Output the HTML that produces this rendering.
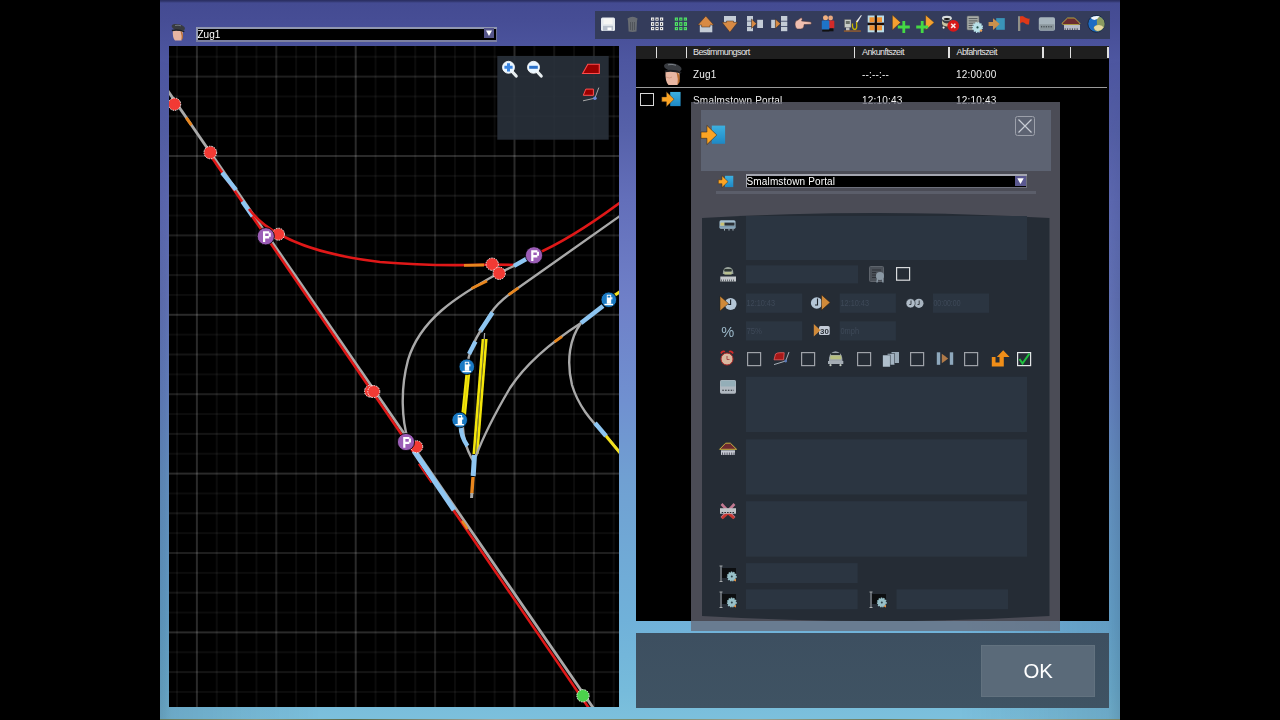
<!DOCTYPE html><html><head><meta charset="utf-8"><style>
*{margin:0;padding:0;box-sizing:border-box}
html,body{width:1280px;height:720px;overflow:hidden;background:#000;font-family:"Liberation Sans",sans-serif}
.abs{position:absolute}
#panel{position:absolute;left:160px;top:0;width:960px;height:720px;
 background:linear-gradient(to bottom,#2a2e62 0px,#2e3368 1px,#444b92 3px,#464d95 20px,#4d56a0 60px,#5661a9 130px,#636fba 200px,#6f80c8 300px,#7090d0 400px,#70a0d2 480px,#70aad6 560px,#70b1d9 620px,#76bbdb 690px,#7cc0dc 718px)}
#vig{position:absolute;left:160px;top:0;width:960px;height:720px;
 background:linear-gradient(to right,rgba(0,10,40,0.2) 0px,rgba(0,10,40,0.12) 12px,rgba(0,0,0,0) 160px,rgba(0,0,0,0) 800px,rgba(0,10,40,0.12) 948px,rgba(0,10,40,0.2) 960px);
 -webkit-mask-image:linear-gradient(to bottom,transparent 60px,#000 300px);mask-image:linear-gradient(to bottom,transparent 60px,#000 300px)}
#strip{position:absolute;left:160px;top:718.5px;width:960px;height:1.5px;background:linear-gradient(to right,#6a7a5a,#8a9478 10%,#5a6a4a 20%,#a0a49a 35%,#7a8a6a 50%,#9aa090 62%,#6a7a5a 75%,#a4a898 88%,#7a8668)}
#map{position:absolute;left:169px;top:46px;width:450px;height:661px;background:#000}
#list{position:absolute;left:636px;top:46px;width:473px;height:575px;background:#000}
#hdr{position:absolute;left:0;top:0;width:473px;height:13px;background:#1e1e1e}
.sep{position:absolute;top:1px;width:2px;height:11px;background:#e8e8e8}
.ht{position:absolute;top:1px;font-size:9px;color:#e6e6e6;letter-spacing:-0.6px;line-height:11px}
.rt{position:absolute;font-size:10px;color:#f0f0f0;line-height:12px;letter-spacing:0.2px}
#toolbar{position:absolute;left:595px;top:11px;width:515px;height:28px;background:#343b5b}
#dlg{position:absolute;left:691px;top:102px;width:369px;height:529px;background:rgba(100,103,118,0.72)}
#ok{position:absolute;left:636px;top:633px;width:473px;height:75px;background:linear-gradient(to bottom,#3d4f60,#3f5363)}
#okbtn{position:absolute;left:981px;top:645px;width:114px;height:52px;background:#5a6a79;color:#fff;font-size:21px;text-align:center;line-height:52px;border:1px solid #62727f}
#okbtn span{display:inline-block;transform:scaleX(0.97);position:relative;top:-1.5px}
</style></head><body><div id="panel"></div><div id="vig"></div><div id="strip"></div><svg id="map" width="450" height="661" viewBox="169 46 450 661"><rect x="169" y="46" width="450" height="661" fill="#000"/><rect x="176.05" y="46" width="2" height="661" fill="#0c0c0c"/><rect x="195.90" y="46" width="2" height="661" fill="#2a2a2a"/><rect x="215.75" y="46" width="2" height="661" fill="#0c0c0c"/><rect x="235.60" y="46" width="2" height="661" fill="#141414"/><rect x="255.45" y="46" width="2" height="661" fill="#0c0c0c"/><rect x="275.30" y="46" width="2" height="661" fill="#1e1e1e"/><rect x="295.15" y="46" width="2" height="661" fill="#0c0c0c"/><rect x="315.00" y="46" width="2" height="661" fill="#141414"/><rect x="334.85" y="46" width="2" height="661" fill="#0c0c0c"/><rect x="354.70" y="46" width="2" height="661" fill="#2a2a2a"/><rect x="374.55" y="46" width="2" height="661" fill="#0c0c0c"/><rect x="394.40" y="46" width="2" height="661" fill="#141414"/><rect x="414.25" y="46" width="2" height="661" fill="#0c0c0c"/><rect x="434.10" y="46" width="2" height="661" fill="#1e1e1e"/><rect x="453.95" y="46" width="2" height="661" fill="#0c0c0c"/><rect x="473.80" y="46" width="2" height="661" fill="#141414"/><rect x="493.65" y="46" width="2" height="661" fill="#0c0c0c"/><rect x="513.50" y="46" width="2" height="661" fill="#2a2a2a"/><rect x="533.35" y="46" width="2" height="661" fill="#0c0c0c"/><rect x="553.20" y="46" width="2" height="661" fill="#141414"/><rect x="573.05" y="46" width="2" height="661" fill="#0c0c0c"/><rect x="592.90" y="46" width="2" height="661" fill="#1e1e1e"/><rect x="612.75" y="46" width="2" height="661" fill="#0c0c0c"/><rect x="169" y="55.75" width="450" height="2" fill="#0c0c0c" style="mix-blend-mode:screen"/><rect x="169" y="75.60" width="450" height="2" fill="#1e1e1e" style="mix-blend-mode:screen"/><rect x="169" y="95.45" width="450" height="2" fill="#0c0c0c" style="mix-blend-mode:screen"/><rect x="169" y="115.30" width="450" height="2" fill="#141414" style="mix-blend-mode:screen"/><rect x="169" y="135.15" width="450" height="2" fill="#0c0c0c" style="mix-blend-mode:screen"/><rect x="169" y="155.00" width="450" height="2" fill="#2a2a2a" style="mix-blend-mode:screen"/><rect x="169" y="174.85" width="450" height="2" fill="#0c0c0c" style="mix-blend-mode:screen"/><rect x="169" y="194.70" width="450" height="2" fill="#141414" style="mix-blend-mode:screen"/><rect x="169" y="214.55" width="450" height="2" fill="#0c0c0c" style="mix-blend-mode:screen"/><rect x="169" y="234.40" width="450" height="2" fill="#1e1e1e" style="mix-blend-mode:screen"/><rect x="169" y="254.25" width="450" height="2" fill="#0c0c0c" style="mix-blend-mode:screen"/><rect x="169" y="274.10" width="450" height="2" fill="#141414" style="mix-blend-mode:screen"/><rect x="169" y="293.95" width="450" height="2" fill="#0c0c0c" style="mix-blend-mode:screen"/><rect x="169" y="313.80" width="450" height="2" fill="#2a2a2a" style="mix-blend-mode:screen"/><rect x="169" y="333.65" width="450" height="2" fill="#0c0c0c" style="mix-blend-mode:screen"/><rect x="169" y="353.50" width="450" height="2" fill="#141414" style="mix-blend-mode:screen"/><rect x="169" y="373.35" width="450" height="2" fill="#0c0c0c" style="mix-blend-mode:screen"/><rect x="169" y="393.20" width="450" height="2" fill="#1e1e1e" style="mix-blend-mode:screen"/><rect x="169" y="413.05" width="450" height="2" fill="#0c0c0c" style="mix-blend-mode:screen"/><rect x="169" y="432.90" width="450" height="2" fill="#141414" style="mix-blend-mode:screen"/><rect x="169" y="452.75" width="450" height="2" fill="#0c0c0c" style="mix-blend-mode:screen"/><rect x="169" y="472.60" width="450" height="2" fill="#2a2a2a" style="mix-blend-mode:screen"/><rect x="169" y="492.45" width="450" height="2" fill="#0c0c0c" style="mix-blend-mode:screen"/><rect x="169" y="512.30" width="450" height="2" fill="#141414" style="mix-blend-mode:screen"/><rect x="169" y="532.15" width="450" height="2" fill="#0c0c0c" style="mix-blend-mode:screen"/><rect x="169" y="552.00" width="450" height="2" fill="#1e1e1e" style="mix-blend-mode:screen"/><rect x="169" y="571.85" width="450" height="2" fill="#0c0c0c" style="mix-blend-mode:screen"/><rect x="169" y="591.70" width="450" height="2" fill="#141414" style="mix-blend-mode:screen"/><rect x="169" y="611.55" width="450" height="2" fill="#0c0c0c" style="mix-blend-mode:screen"/><rect x="169" y="631.40" width="450" height="2" fill="#2a2a2a" style="mix-blend-mode:screen"/><rect x="169" y="651.25" width="450" height="2" fill="#0c0c0c" style="mix-blend-mode:screen"/><rect x="169" y="671.10" width="450" height="2" fill="#141414" style="mix-blend-mode:screen"/><rect x="169" y="690.95" width="450" height="2" fill="#0c0c0c" style="mix-blend-mode:screen"/><g fill="none" stroke-linecap="butt">
<!-- main gray line -->
<path d="M165.5,87.5 L594,709" stroke="#a9a9a9" stroke-width="2.8"/>
<!-- main red line -->
<path d="M211,156.2 L590,709.8" stroke="#e01818" stroke-width="2.6"/>
<!-- orange dash top -->
<path d="M186.2,117.6 L191.4,125.1" stroke="#e8861e" stroke-width="2.8"/>
<!-- light blue on main upper -->
<path d="M222,172.6 L236,189.8" stroke="#8ec6f2" stroke-width="4.4"/>
<path d="M242.4,201.6 L252.6,216.2" stroke="#8ec6f2" stroke-width="4.4"/>
<!-- light blue lower main -->
<path d="M414,451 L454,510" stroke="#8ec6f2" stroke-width="5"/>
<path d="M420.2,463 L433,481.6" stroke="#e01818" stroke-width="1.6" transform="translate(-1.6,1)"/>
<path d="M461,521.5 L466.5,529.5" stroke="#e8861e" stroke-width="2.4" transform="translate(1,-0.5)"/>
<!-- red branch curve -->
<path d="M249,209 C258,221 267,228 279,234 C300,246 330,256 380,262 C420,265.5 460,265.5 492,264.5 L516,265" stroke="#e01818" stroke-width="2.6"/>
<path d="M464,265.3 L484,265" stroke="#e8861e" stroke-width="2.8"/>
<!-- red to top right -->
<path d="M534,255 C560,244 590,225 621,202" stroke="#e01818" stroke-width="2.6"/>
<!-- gray A -->
<path d="M516,265 L499,273 C455,297 420,320 408,360 C400,390 402,420 408,440" stroke="#a9a9a9" stroke-width="2.4"/>
<path d="M471.5,288.4 L487,281" stroke="#e8861e" stroke-width="2.8"/>
<path d="M514,265.8 L528,258" stroke="#8ec6f2" stroke-width="4.4"/>
<!-- gray B -->
<path d="M621,215.2 L518,288 C505,297 496,305 491,313 L480,331" stroke="#a9a9a9" stroke-width="2.4"/>
<path d="M508.5,294.8 L518.5,287.8" stroke="#e8861e" stroke-width="2.8"/>
<path d="M492.5,312.5 L480,331.5" stroke="#8ec6f2" stroke-width="4.6"/>
<!-- left branch -->
<path d="M481,330 C476,338 471,348 468.5,358 L468,372 L463.6,415 C461,432 466,450 474,462" stroke="#a9a9a9" stroke-width="2.4"/>
<path d="M475.5,341.5 L469,354" stroke="#8ec6f2" stroke-width="4.4"/>
<path d="M468,372 L463.6,415" stroke="#f4e60a" stroke-width="4.8"/><path d="M468,374 L463.6,413" stroke="#c8b800" stroke-width="0.6"/>
<path d="M460.8,427 C461,435 464,441 467.5,446" stroke="#8ec6f2" stroke-width="4.4"/>
<!-- double yellow -->
<path d="M484.6,333 L475.5,456" stroke="#a9a9a9" stroke-width="1.2"/>
<path d="M482.9,339 L473.8,454" stroke="#f4e60a" stroke-width="2.6"/>
<path d="M486.3,339 L477.2,454" stroke="#f4e60a" stroke-width="2.6"/>
<path d="M484.6,339 L475.5,454" stroke="#6a6400" stroke-width="0.7"/>
<!-- right gray C to junction -->
<path d="M581,323 C550,343 525,365 510,388 C497,410 485,432 476,456" stroke="#a9a9a9" stroke-width="2.4"/>
<path d="M554.5,341.8 L562,336.6" stroke="#e8861e" stroke-width="2.8"/>
<!-- junction bottom -->
<path d="M474.5,455 L473.2,476" stroke="#8ec6f2" stroke-width="5"/>
<path d="M473,477 L471.8,494" stroke="#e8861e" stroke-width="3.4"/>
<path d="M471.9,493 L471.6,498" stroke="#a9a9a9" stroke-width="3"/>
<!-- right branch D -->
<path d="M581,323 C570,338 566,360 572,385 C578,405 590,420 606,435.5 L621,454" stroke="#a9a9a9" stroke-width="2.4"/>
<path d="M595,423 L606,436" stroke="#8ec6f2" stroke-width="4.4"/>
<path d="M606,436 L621,454" stroke="#f2e01e" stroke-width="3"/>
<path d="M581,323 L603,306" stroke="#8ec6f2" stroke-width="4.6"/>
<path d="M612,297 L621,291" stroke="#f2e01e" stroke-width="3"/>
</g>
<!-- markers -->
<g stroke="#fff" stroke-width="0.9" stroke-dasharray="1.5 1">
<circle cx="174.5" cy="104.2" r="6.2" fill="#f23a34"/>
<circle cx="210.3" cy="152.5" r="6.3" fill="#f23a34"/>
<circle cx="278.5" cy="234.2" r="6" fill="#f23a34"/>
<circle cx="370.5" cy="391.2" r="6" fill="#f23a34"/>
<circle cx="373.8" cy="391.6" r="6" fill="#f23a34"/>
<circle cx="416.7" cy="446.7" r="6" fill="#f23a34"/>
<circle cx="492.2" cy="264.2" r="6.2" fill="#f23a34"/>
<circle cx="499.2" cy="273.3" r="6.2" fill="#f23a34"/>
<circle cx="583" cy="695.8" r="6.2" fill="#4cd24c"/>
</g>
<g stroke="#000" stroke-width="0.8">
<circle cx="265.8" cy="236.3" r="8.6" fill="#9b5db6"/>
<circle cx="406" cy="442" r="8.6" fill="#9b5db6"/>
<circle cx="534" cy="255.3" r="8.6" fill="#9b5db6"/>
<circle cx="466.8" cy="366.8" r="7.8" fill="#1a7ac4"/>
<circle cx="459.7" cy="420" r="7.8" fill="#1a7ac4"/>
<circle cx="608.8" cy="299.8" r="7.8" fill="#1a7ac4"/>
</g>
<g fill="#fff">
<path d="M263,231.2 h6.2 v1.6 h1.6 v4 h-1.6 v1.6 h-4 v3.6 h-2.2 z M265.2,233.4 v2.6 h3.4 v-2.6 z" fill-rule="evenodd"/>
<path d="M403.2,436.9 h6.2 v1.6 h1.6 v4 h-1.6 v1.6 h-4 v3.6 h-2.2 z M405.4,439.1 v2.6 h3.4 v-2.6 z" fill-rule="evenodd"/>
<path d="M531.2,250.2 h6.2 v1.6 h1.6 v4 h-1.6 v1.6 h-4 v3.6 h-2.2 z M533.4,252.4 v2.6 h3.4 v-2.6 z" fill-rule="evenodd"/>
</g>
<g fill="#fff">
<g transform="translate(466.8,366.8)"><path d="M-2,-5 h4.4 v9 h-4.4 z M-1.2,-4 v1.6 h2.6 v-1.6 z" fill-rule="evenodd"/><rect x="-4.4" y="4" width="8.6" height="1.4"/><rect x="2.4" y="-2.6" width="1.2" height="2.2"/></g>
<g transform="translate(459.7,420)"><path d="M-2,-5 h4.4 v9 h-4.4 z M-1.2,-4 v1.6 h2.6 v-1.6 z" fill-rule="evenodd"/><rect x="-4.4" y="4" width="8.6" height="1.4"/><rect x="2.4" y="-2.6" width="1.2" height="2.2"/></g>
<g transform="translate(608.8,299.8)"><path d="M-2,-5 h4.4 v9 h-4.4 z M-1.2,-4 v1.6 h2.6 v-1.6 z" fill-rule="evenodd"/><rect x="-4.4" y="4" width="8.6" height="1.4"/><rect x="2.4" y="-2.6" width="1.2" height="2.2"/></g>
</g>
<!-- overlay panel -->
<rect x="497.3" y="56" width="111.4" height="83.7" fill="#29313b" fill-opacity="0.9"/>
<!-- overlay icons -->
<g>
<path d="M512.5,72 L516.2,76" stroke="#e8eef0" stroke-width="3.2" stroke-linecap="round"/>
<circle cx="508.5" cy="67.3" r="6" fill="#eaf6ff" stroke="#ffffff" stroke-width="0.8"/>
<path d="M508.5,63.2 V71.4 M504.4,67.3 H512.6" stroke="#3a84e0" stroke-width="3"/>
<path d="M537.5,72 L541.2,76" stroke="#e8eef0" stroke-width="3.2" stroke-linecap="round"/>
<circle cx="533.5" cy="67.3" r="6" fill="#eaf6ff" stroke="#ffffff" stroke-width="0.8"/>
<path d="M529.2,67.3 H537.8" stroke="#2a70c8" stroke-width="3"/>
<path d="M582.6,73.5 L587.8,64.2 L599.3,64.2 L599.3,73.5 Z" fill="#9a0000" stroke="#ff4a4a" stroke-width="1.1"/>
<path d="M583.3,95.3 L585.8,89.1 L593.4,89.1 L593.4,95.3 Z" fill="#9a0000" stroke="#ff5050" stroke-width="1"/>
<path d="M583,100.8 L594.9,98.2 L598.8,87.6" stroke="#a8a8a8" stroke-width="1" fill="none"/>
<circle cx="594.9" cy="98.2" r="1.8" fill="#6a8ad8"/>
</g>
</svg><!-- driver icon top-left -->
<svg class="abs" style="left:168px;top:20px" width="22" height="24" viewBox="168 20 22 24">
<path d="M172.8,30 Q172.5,38.5 175,40.5 L181.5,40.5 Q183.2,36.5 182.8,30 Z" fill="#e8b6a2"/>
<path d="M180.5,30.8 Q183.5,32.5 182.8,38.5 L181.5,40.5 Q182.2,36 180.5,30.8 Z" fill="#b86c30"/>
<ellipse cx="178.3" cy="27.4" rx="6.8" ry="3.2" fill="#383b40" transform="rotate(13 178.3 27.4)"/>
<path d="M171.6,29.8 Q178,28.4 184.6,31 L184,32.2 Q178,30 172.2,31.2 Z" fill="#1e2024"/>
<path d="M175,25.5 Q178,24.8 181,25.8" stroke="#8a9098" stroke-width="0.7" fill="none"/>
</svg>
<!-- Zug1 combo -->
<div class="abs" style="left:196px;top:27px;width:301px;height:15px;background:#9097b0"></div>
<div class="abs" style="left:197.5px;top:29px;width:298.5px;height:11px;background:#000"></div>
<div class="abs" style="left:196px;top:40px;width:301px;height:1.5px;background:#7c80a0"></div><div class="abs" style="left:496px;top:29px;width:1px;height:11px;background:#6c7096"></div>
<div class="abs" style="left:484px;top:28px;width:10px;height:10px;background:#55558a"></div>
<svg class="abs" style="left:484px;top:28px" width="10" height="10" viewBox="0 0 10 10"><path d="M2,2.5 L8,2.5 L5,8 Z" fill="#fff"/></svg>
<div class="abs" style="left:197.5px;top:29px;font-size:10px;line-height:12px;color:#fff">Zug1</div>

<!-- list panel -->
<div class="abs" style="left:636px;top:46px;width:473px;height:575px;background:#000"></div>
<div class="abs" style="left:636px;top:46px;width:473px;height:13px;background:#1f1f1f"></div>
<div class="abs" style="left:655.5px;top:47px;width:1.5px;height:11px;background:#e0e0e0"></div>
<div class="abs" style="left:685.8px;top:47px;width:1.5px;height:11px;background:#e0e0e0"></div>
<div class="abs" style="left:853.6px;top:47px;width:1.5px;height:11px;background:#e0e0e0"></div>
<div class="abs" style="left:948px;top:47px;width:1.5px;height:11px;background:#e0e0e0"></div>
<div class="abs" style="left:1042px;top:47px;width:1.5px;height:11px;background:#e0e0e0"></div>
<div class="abs" style="left:1069.7px;top:47px;width:1.5px;height:11px;background:#e0e0e0"></div>
<div class="abs" style="left:1107px;top:47px;width:1.5px;height:11px;background:#e0e0e0"></div>
<div class="abs ht" style="left:693px;top:47px">Bestimmungsort</div>
<div class="abs ht" style="left:862px;top:47px">Ankunftszeit</div>
<div class="abs ht" style="left:956.5px;top:47px">Abfahrtszeit</div>

<svg class="abs" style="left:660px;top:60px" width="26" height="28" viewBox="660 60 26 28">
<path d="M665.5,71 Q665,82 668.5,85 L677.5,85 Q680,80 679.5,71 Z" fill="#e8b6a2"/>
<path d="M676.5,72 Q680.5,74 679.6,82 L677.5,85 Q678.5,79 676.5,72 Z" fill="#b86c30"/>
<path d="M666,77 Q670,79 672,77" stroke="#c88870" stroke-width="0.6" fill="none"/>
<ellipse cx="672.8" cy="67.4" rx="9" ry="4" fill="#383b40" transform="rotate(13 672.8 67.4)"/>
<path d="M664.5,70.5 Q673,68.6 681.5,72 L680.8,73.6 Q673,70.6 665.3,72.2 Z" fill="#1e2024"/>
<path d="M668,64.8 Q672,63.8 676,65.2" stroke="#8a9098" stroke-width="0.8" fill="none"/>
</svg>
<div class="abs rt" style="left:693px;top:68.8px">Zug1</div>
<div class="abs rt" style="left:862px;top:68.8px">--:--:--</div>
<div class="abs rt" style="left:956px;top:68.8px">12:00:00</div>
<div class="abs" style="left:636px;top:87px;width:471px;height:1px;background:#9a9a9a"></div>

<div class="abs" style="left:640px;top:93px;width:14px;height:13px;border:1.3px solid #d8d8d8"></div>
<svg class="abs" style="left:660px;top:89px" width="24" height="20" viewBox="660 89 24 20">
<defs><linearGradient id="bg2" x1="0" y1="0" x2="0" y2="1"><stop offset="0" stop-color="#3cb0e0"/><stop offset="1" stop-color="#1e88c4"/></linearGradient></defs>
<g transform="translate(661,89.9) scale(0.78)">
<rect x="11.8" y="2.6" width="13.3" height="18.2" fill="url(#bg2)"/>
<path d="M1,9 H6.9 V2.4 L16.8,12 L6.9,21.6 V15.3 H1 Z" fill="#fba424" stroke="#3a2a18" stroke-width="0.6"/>
</g></svg>
<div class="abs rt" style="left:693px;top:95px">Smalmstown Portal</div>
<div class="abs rt" style="left:862px;top:95px">12:10:43</div>
<div class="abs rt" style="left:956px;top:95px">12:10:43</div>
<svg class="abs" style="left:595px;top:11px" width="515" height="28" viewBox="595 11 515 28">
<rect x="595" y="11" width="515" height="28" fill="#343c5b"/>
<!-- 1 floppy -->
<rect x="601" y="17.4" width="14" height="13.7" rx="1.5" fill="#e6eaee"/>
<rect x="603.5" y="18.5" width="9" height="5.5" fill="#f6f6f4"/>
<rect x="603" y="25.8" width="10" height="5" fill="#b8c0cc"/>
<rect x="607.5" y="27.5" width="4" height="2.6" fill="#fff"/>
<!-- 2 trash -->
<path d="M627.5,18.6 Q632.5,14.8 637.6,18.6 L637,21 L636.5,31.6 Q632.5,32.4 628.6,31.6 L628,21 Z" fill="#686c72"/>
<path d="M630.5,22 V30 M632.5,22 V30.5 M634.5,22 V30" stroke="#4a4e54" stroke-width="0.8"/>
<!-- 3 grid white -->
<g fill="#f0f0f0">
<rect x="651" y="17.5" width="3.2" height="3.1"/><rect x="655.4" y="17.5" width="3.2" height="3.1"/><rect x="660" y="17.5" width="3.2" height="3.1"/>
<rect x="651" y="22.1" width="3.2" height="3.8"/><rect x="655.4" y="22.1" width="3.2" height="3.8"/><rect x="660" y="22.1" width="3.2" height="3.8"/>
<rect x="651" y="27.1" width="3.2" height="3.1"/><rect x="655.4" y="27.1" width="3.2" height="3.1"/><rect x="660" y="27.1" width="3.2" height="3.1"/>
</g>
<g fill="#111"><rect x="652.3" y="18.7" width="1" height="1"/><rect x="656.2" y="18.8" width="1.6" height="0.8"/><rect x="660.9" y="18.7" width="1" height="1"/><rect x="652.4" y="23.2" width="0.8" height="1.8"/><rect x="656.3" y="23.3" width="1.4" height="1.6"/><rect x="661" y="23.2" width="0.8" height="1.8"/><rect x="652.3" y="28.1" width="1" height="1"/><rect x="656.2" y="28.2" width="1.6" height="0.8"/><rect x="660.9" y="28.1" width="1" height="1"/></g>
<!-- 4 grid green -->
<g fill="#52e06a">
<rect x="674.8" y="17.5" width="3.2" height="3.1"/><rect x="679.2" y="17.5" width="3.2" height="3.1"/><rect x="683.8" y="17.5" width="3.2" height="3.1"/>
<rect x="674.8" y="22.1" width="3.2" height="3.8"/><rect x="679.2" y="22.1" width="3.2" height="3.8"/><rect x="683.8" y="22.1" width="3.2" height="3.8"/>
<rect x="674.8" y="27.1" width="3.2" height="3.1"/><rect x="679.2" y="27.1" width="3.2" height="3.1"/><rect x="683.8" y="27.1" width="3.2" height="3.1"/>
</g>
<g fill="#2a7a3a"><rect x="676.1" y="18.7" width="1" height="1"/><rect x="680" y="18.8" width="1.6" height="0.8"/><rect x="684.7" y="18.7" width="1" height="1"/><rect x="676.2" y="23.2" width="0.8" height="1.8"/><rect x="680.1" y="23.3" width="1.4" height="1.6"/><rect x="684.8" y="23.2" width="0.8" height="1.8"/><rect x="676.1" y="28.1" width="1" height="1"/><rect x="680" y="28.2" width="1.6" height="0.8"/><rect x="684.7" y="28.1" width="1" height="1"/></g>
<!-- 5 up arrow -->
<rect x="699.8" y="24.5" width="12.5" height="7.8" fill="#c4ccd6"/>
<path d="M697.8,25 L705.8,16 L713.8,25 L710,25 L710,27 L701.6,27 L701.6,25 Z" fill="#d88a44" stroke="#3a2a20" stroke-width="0.5"/>
<!-- 6 down arrow -->
<rect x="724" y="16" width="12" height="6.5" fill="#c4ccd6"/>
<path d="M722,22.3 L726.5,22.3 L726.5,21 L733.5,21 L733.5,22.3 L737.7,22.3 L729.9,32.3 Z" fill="#d88a44" stroke="#3a2a20" stroke-width="0.5"/>
<!-- 7 insert right -->
<g fill="#c4ccd6"><rect x="747" y="16" width="6" height="4.8"/><rect x="747" y="21.4" width="6" height="4.6"/><rect x="747" y="26.8" width="6" height="4.4"/><rect x="757.2" y="19.8" width="5.8" height="8.2"/></g>
<path d="M751.5,19 L756.6,23.7 L751.5,28.4 Z" fill="#d88a44" stroke="#2a2420" stroke-width="0.5"/>
<!-- 8 insert left -->
<g fill="#c4ccd6"><rect x="781" y="16" width="6.3" height="4.8"/><rect x="781" y="21.6" width="6.3" height="4.4"/><rect x="781" y="26.8" width="6.3" height="4.4"/><rect x="771.2" y="19.8" width="4.4" height="8.2"/></g>
<path d="M775.4,19 L780.6,23.7 L775.4,28.4 Z" fill="#d88a44" stroke="#2a2420" stroke-width="0.5"/>
<!-- 9 hand -->
<path d="M795,24 Q795,20.5 798,20 L801,17.8 Q802.5,17.6 802.2,19.5 L801.5,21 L811,22 Q811.8,23.2 811,24.2 L804,24.6 Q804.5,28.5 801,29 L797.5,29 Q795,28 795,24 Z" fill="#f0bfb0" stroke="#4a3030" stroke-width="0.5"/>
<!-- 10 people -->
<circle cx="830.6" cy="18" r="2.4" fill="#e8a880"/>
<rect x="828" y="20.5" width="6.3" height="8" rx="1" fill="#d42a2a"/>
<rect x="829" y="28.3" width="4.5" height="3" fill="#111"/>
<circle cx="825.5" cy="17.8" r="2.5" fill="#f0b080"/>
<rect x="821.8" y="20.4" width="7.6" height="9.4" rx="1" fill="#1e74c8"/>
<rect x="822.2" y="29.6" width="7" height="2" fill="#111"/>
<!-- 11 machine -->
<rect x="844.5" y="19.5" width="6.5" height="8" fill="#c8ccc8" stroke="#555" stroke-width="0.4"/>
<rect x="845.8" y="21" width="4" height="3" fill="#6a706a"/>
<rect x="846" y="27.5" width="3.5" height="3" fill="#c0c0c0"/>
<path d="M852.5,23.5 Q852,29.5 855,29.5 Q857.5,29 856.5,23 L857,21" stroke="#c8b800" stroke-width="1.3" fill="none"/>
<path d="M856,21.5 L861,15 L861.8,15.6 L857.5,22.5 Z" fill="#e8e8e8"/>
<rect x="843.9" y="30.4" width="17" height="1.3" fill="#a06028"/>
<!-- 12 expand -->
<g fill="#b8dce8"><rect x="867.7" y="15.5" width="7" height="7"/><rect x="877" y="15.5" width="7" height="7"/><rect x="867.7" y="25.3" width="7" height="7"/><rect x="877" y="25.3" width="7" height="7"/></g>
<g fill="#f09030"><rect x="869.5" y="17.3" width="5" height="5"/><rect x="877" y="17.3" width="5" height="5"/><rect x="869.5" y="25.3" width="5" height="5"/><rect x="877" y="25.3" width="5" height="5"/></g>
<path d="M875.8,15.5 V32.3 M867.7,23.9 H884.1" stroke="#1a0c04" stroke-width="2"/>
<!-- 13 play plus -->
<path d="M892.4,15 L900.6,22.5 L892.4,30 Z" fill="#f5a030" stroke="#3a2a10" stroke-width="0.4"/>
<path d="M903.8,21 V33 M897.8,27 H909.8" stroke="#44d844" stroke-width="2.8"/>
<!-- 14 plus play -->
<path d="M925.6,15 L934.2,22.5 L925.6,30 Z" fill="#f5a030" stroke="#3a2a10" stroke-width="0.4"/>
<path d="M922.2,21 V33 M916.2,27 H928.2" stroke="#44d844" stroke-width="2.8"/>
<!-- 15 lock x -->
<rect x="942" y="18" width="9.8" height="11" rx="1.5" fill="#3a3e44"/>
<path d="M942,19.5 Q942,22.5 946.9,23.5 Q951.8,22.5 951.8,19.5 L951.8,23 Q951.8,26 946.9,26.5 Q942,26 942,23 Z" fill="#c8c4a0"/>
<ellipse cx="946.9" cy="18.2" rx="4.9" ry="2.4" fill="#d8dcdc"/>
<ellipse cx="946.9" cy="19" rx="3.2" ry="0.9" fill="#101010"/>
<circle cx="943.6" cy="27.6" r="1.1" fill="#f0f0f0"/>
<circle cx="953.3" cy="25.8" r="5.9" fill="#d81818"/>
<path d="M951.2,23.7 L955.4,27.9 M955.4,23.7 L951.2,27.9" stroke="#f8e8e8" stroke-width="1.5"/>
<!-- 16 doc gear -->
<rect x="967" y="16" width="12" height="14" rx="1" fill="#a8aca8" stroke="#606466" stroke-width="0.6"/>
<path d="M968.6,18.6 H977.5 M968.6,20.9 H977.5 M968.6,23.2 H975 M968.6,25.5 H974 M968.6,27.8 H974" stroke="#4a5052" stroke-width="0.9"/>
<circle cx="977.5" cy="27.4" r="4.6" fill="#b8e0e8" stroke="#b8e0e8" stroke-width="1.8" stroke-dasharray="1.3 1.1"/>
<circle cx="977.5" cy="27.4" r="1.1" fill="#1e5048"/>
<circle cx="981" cy="30.6" r="1.2" fill="#f0a050"/>
<!-- 17 arrow into box -->
<rect x="996.2" y="18.1" width="8.6" height="11.7" fill="#3a94b8"/>
<path d="M988.6,22 H993 V18.2 L999.7,24 L993,30 V26 H988.6 Z" fill="#c8904c"/>
<!-- 18 flag -->
<rect x="1018" y="16.2" width="2.3" height="14.8" fill="#909088"/>
<path d="M1020,16.5 Q1023,15 1025,17.5 Q1027.5,19 1029.6,18.5 L1029,24.5 Q1026.5,25 1024.5,23 Q1022.5,21.5 1020,23.5 Z" fill="#e03818"/>
<!-- 19 platform -->
<rect x="1038.8" y="17.3" width="16.2" height="13.5" rx="1.8" fill="#a6b4bc"/>
<rect x="1039.5" y="24.3" width="14.8" height="5.6" fill="#8a969c"/>
<path d="M1041,26.8 H1053" stroke="#30383c" stroke-width="1" stroke-dasharray="1.2 1.2"/>
<!-- 20 station -->
<path d="M1061.8,23.6 L1067.5,18 L1074.5,18 L1080.1,23.6 L1078.3,24.6 L1063.6,24.6 Z" fill="#6a2c30" stroke="#c0b040" stroke-width="0.9"/>
<rect x="1064" y="25" width="16" height="5" fill="#b8bcc8"/>
<path d="M1065.2,28.3 V30.2 M1067.6,28.3 V30.2 M1070,28.3 V30.2 M1072.4,28.3 V30.2 M1074.8,28.3 V30.2 M1077.2,28.3 V30.2" stroke="#3a3c48" stroke-width="0.9"/>
<!-- 21 globe -->
<circle cx="1096.3" cy="23.8" r="8.4" fill="#1e6cc4" stroke="#10182a" stroke-width="0.7"/>
<path d="M1097.5,16.2 Q1102,16.8 1104,20.5 Q1105.2,24 1104.2,27 Q1102.5,30.5 1098.5,31.6 Q1094,31 1093.6,28 Q1094.5,25.5 1097,24.8 Q1096.5,21 1097.5,16.2 Z" fill="#8a9a60"/>
<path d="M1093.8,27.5 Q1095,25 1099,25 Q1102.5,25.2 1103.6,27.5 Q1101.5,30.6 1097.5,31 Q1094.5,30 1093.8,27.5 Z" fill="#e8d8a0"/>
<path d="M1090.6,17.8 Q1094,15.2 1099.6,16.2 Q1098,19 1094.5,20 Q1092,19.8 1090.6,17.8 Z" fill="#f4f6f8"/>
</svg>
<div class="abs" style="left:691px;top:102px;width:369px;height:528.5px;background:rgba(103,104,118,0.73)"></div>
<div class="abs" style="left:701px;top:110px;width:350px;height:61px;background:#5d6372"></div>
<svg class="abs" style="left:700px;top:123px" width="28" height="24" viewBox="0 0 28 24">
<defs><linearGradient id="bg1" x1="0" y1="0" x2="0" y2="1"><stop offset="0" stop-color="#3cb0e0"/><stop offset="1" stop-color="#1e88c4"/></linearGradient></defs>
<rect x="11.8" y="2.6" width="13.3" height="18.2" fill="url(#bg1)"/>
<path d="M1,9 H6.9 V2.4 L16.8,12 L6.9,21.6 V15.3 H1 Z" fill="#fba424" stroke="#3a2a18" stroke-width="0.6"/>
</svg>
<svg class="abs" style="left:1014px;top:115px" width="22" height="22" viewBox="0 0 22 22">
<rect x="1.5" y="1.5" width="19" height="19" rx="2" fill="none" stroke="#9ca0aa" stroke-width="1"/>
<path d="M4.5,4.5 L17.5,17.5 M17.5,4.5 L4.5,17.5" stroke="#c8ccd4" stroke-width="1.2"/>
</svg>
<svg class="abs" style="left:716px;top:172px" width="20" height="18" viewBox="716 172 20 18">
<defs><linearGradient id="bg3" x1="0" y1="0" x2="0" y2="1"><stop offset="0" stop-color="#3cb0e0"/><stop offset="1" stop-color="#1e88c4"/></linearGradient></defs>
<g transform="translate(717.7,174.2) scale(0.62)">
<rect x="11.8" y="2.6" width="13.3" height="18.2" fill="url(#bg3)"/>
<path d="M1,9 H6.9 V2.4 L16.8,12 L6.9,21.6 V15.3 H1 Z" fill="#fba424" stroke="#3a2a18" stroke-width="0.8"/>
</g></svg>
<div class="abs" style="left:745.5px;top:174.3px;width:281.5px;height:13.7px;background:#6e707c"></div><div class="abs" style="left:745.5px;top:174.3px;width:281.5px;height:1.7px;background:#a4a6b0"></div><div class="abs" style="left:745.5px;top:174.3px;width:1.5px;height:13px;background:#a4a6b0"></div>
<div class="abs" style="left:747px;top:176px;width:279px;height:11px;background:#000"></div>
<div class="abs" style="left:1015px;top:175.5px;width:11px;height:10px;background:#5a5890"></div>
<svg class="abs" style="left:1015px;top:175.5px" width="11" height="10" viewBox="0 0 11 10"><path d="M2.3,2.2 L8.7,2.2 L5.5,8 Z" fill="#fff"/></svg>
<div class="abs" style="left:746.5px;top:175.6px;font-size:10px;line-height:12px;letter-spacing:0.15px;color:#fff">Smalmstown Portal</div>
<div class="abs" style="left:716px;top:190.5px;width:320px;height:3.5px;background:#5b5e6a"></div>

<svg class="abs" style="left:691px;top:200px" width="369" height="430" viewBox="691 200 369 430">
<path d="M702,218 Q875.5,208 1049.5,218 L1049.5,616 Q875.5,626 702,616 Z" fill="#252c35"/>
<g fill="#2b3541">
<rect x="746" y="216" width="281" height="44"/>
<rect x="746" y="265.4" width="112" height="18"/>
<rect x="746" y="293.5" width="56.2" height="19.3"/>
<rect x="839.7" y="293.5" width="56.2" height="19.3"/>
<rect x="933" y="293.5" width="56" height="19.3"/>
<rect x="746" y="321.3" width="56.2" height="19.2"/>
<rect x="839.7" y="321.3" width="56.2" height="19.2"/>
<rect x="746" y="376.8" width="281" height="55.2"/>
<rect x="746" y="439.4" width="281" height="55.1"/>
<rect x="746" y="501.2" width="281" height="55.5"/>
<rect x="746" y="563.1" width="111.6" height="19.9"/>
<rect x="746" y="589.4" width="111.6" height="19.8"/>
<rect x="896.5" y="589.4" width="111.6" height="19.8"/>
</g>
<g font-family="Liberation Sans" font-size="8.6" fill="#3e4958">
<text x="746.5" y="306.2" textLength="28.5" lengthAdjust="spacingAndGlyphs">12:10:43</text>
<text x="840.5" y="306.2" textLength="28.5" lengthAdjust="spacingAndGlyphs">12:10:43</text>
<text x="933.5" y="306.2" textLength="27" lengthAdjust="spacingAndGlyphs">00:00:00</text>
<text x="746.5" y="334.2" textLength="15.5" lengthAdjust="spacingAndGlyphs">75%</text>
<text x="840.5" y="334.2" textLength="18.5" lengthAdjust="spacingAndGlyphs">0mph</text>
</g>
<g fill="none" stroke="#d8dadc" stroke-width="1.2">
<rect x="896.6" y="267.6" width="13" height="12.6"/>
</g>
<g fill="none" stroke="#9ea2a8" stroke-width="1.2">
<rect x="747.6" y="352.6" width="13" height="13"/>
<rect x="801.6" y="352.6" width="13" height="13"/>
<rect x="857.6" y="352.6" width="13" height="13"/>
<rect x="910.6" y="352.6" width="13" height="13"/>
<rect x="964.6" y="352.6" width="13" height="13"/>
</g>
<rect x="1017.6" y="352.6" width="13" height="13" fill="none" stroke="#e4e6e8" stroke-width="1.2"/>
<path d="M1019.5,359 L1022.5,363.5 L1029.5,353.5" stroke="#20c040" stroke-width="2" fill="none"/>
</svg>
<svg class="abs" style="left:691px;top:200px" width="369" height="430" viewBox="691 200 369 430">
<!-- row1 railcar -->
<rect x="719.5" y="220.3" width="16" height="8.4" rx="1.5" fill="#a4bfd0"/>
<rect x="720.5" y="222.6" width="4" height="3" fill="#c8c070"/>
<rect x="724.5" y="222.6" width="10" height="3" fill="#2a3036"/>
<rect x="719.5" y="226.3" width="16" height="1.2" fill="#6a8aa0"/>
<path d="M724.5,229 v1.6 M729,229 v1.6 M733,229 v1.6" stroke="#a0b0b8" stroke-width="1"/>
<!-- row2 loco -->
<path d="M722.8,274 Q722.8,267 728,267 Q733.4,267 733.4,274 Z" fill="#9aa49c"/>
<rect x="724.2" y="269" width="7.6" height="2.4" rx="1" fill="#303a34"/>
<rect x="724.4" y="272" width="7.2" height="2.6" fill="#b8c090"/>
<rect x="720.3" y="276.5" width="15.7" height="5" fill="#c4c8cc"/>
<path d="M721.5,279.5 v2 M723.5,279.5 v2 M725.5,279.5 v2 M727.5,279.5 v2 M729.5,279.5 v2 M731.5,279.5 v2 M733.5,279.5 v2" stroke="#3a4046" stroke-width="0.7"/>
<!-- doc icon -->
<rect x="869.5" y="266.5" width="14" height="15" rx="1" fill="#4a5058" stroke="#5e646c" stroke-width="1"/>
<path d="M872,270 H881 M872,272.5 H876 M872,275 H876 M872,277.5 H876" stroke="#2a2e34" stroke-width="0.9"/>
<circle cx="880" cy="276" r="4" fill="#8a98a4"/>
<path d="M877.5,279 L877,282.5 M882.5,279 L883,282.5" stroke="#8a98a4" stroke-width="1.5"/>
<!-- row3 clock arrow -->
<circle cx="730.6" cy="303.9" r="6" fill="#b4c6d6"/>
<path d="M730.6,299.5 V304.5 H728.2" stroke="#1e242a" stroke-width="1.1" fill="none"/>
<path d="M720,296 L728.5,303.5 L720,311 Z" fill="#d08a3a" stroke="#2a2016" stroke-width="0.5"/>
<!-- row3 clock2 -->
<circle cx="816.7" cy="303" r="5.8" fill="#b4c6d6"/>
<path d="M817.5,298.5 V305 H815" stroke="#1e242a" stroke-width="1.1" fill="none"/>
<path d="M821.5,294.8 L830.2,302.5 L821.5,310.3 Z" fill="#d08a3a" stroke="#2a2016" stroke-width="0.6"/>
<!-- double clock -->
<circle cx="918.9" cy="303.3" r="4.6" fill="#a8b4c0"/>
<circle cx="910.6" cy="303.3" r="4.6" fill="#b0bcc8" stroke="#232a33" stroke-width="0.6"/>
<path d="M911,300.5 V304.5 H909.3 M919.2,300.5 V304.5 H917.5" stroke="#2a3036" stroke-width="0.9" fill="none"/>
<!-- percent -->
<text x="721.2" y="337.4" font-family="Liberation Sans" font-size="15.5" fill="#9cb8c8" textLength="13" lengthAdjust="spacingAndGlyphs">%</text>
<!-- 30 icon -->
<rect x="819" y="325.9" width="10.7" height="9.1" rx="1.5" fill="#c4ccd8"/>
<text x="820" y="333.8" font-family="Liberation Sans" font-size="8" font-weight="bold" fill="#2a3036" textLength="8.8" lengthAdjust="spacingAndGlyphs">30</text>
<path d="M813.8,324 L820.5,330.2 L813.8,336.5 Z" fill="#d08a3a"/>
<!-- alarm -->
<circle cx="727" cy="359" r="6" fill="#d8b8a0" stroke="#b02828" stroke-width="1"/>
<path d="M721,353.5 Q722.5,350.5 725,351.8 M733,353.5 Q731.5,350.5 729,351.8" stroke="#d02828" stroke-width="1.8" fill="none"/>
<path d="M727,356 V359.5 H729.5" stroke="#a04040" stroke-width="0.9" fill="none"/>
<!-- track icon -->
<path d="M774,359.8 L775.5,354 Q777,352.7 780,352.7 L784.2,352.7 L783.6,359.8 Z" fill="#a81818" stroke="#e86060" stroke-width="0.8"/>
<path d="M774,364.6 L785.7,361 L789,352" stroke="#a8b0b8" stroke-width="1" fill="none"/>
<circle cx="785.7" cy="361" r="1.4" fill="#5a7ab8"/>
<!-- train front -->
<path d="M829,361 Q828.5,352 835.5,351.3 Q842.5,352 842.5,361 Z" fill="#9ca4ac"/>
<rect x="830.3" y="355.5" width="11" height="3.8" fill="#b8c080"/>
<rect x="831" y="353" width="9" height="2" fill="#2a3034"/>
<rect x="828" y="361" width="15.3" height="3" fill="#a4acb4"/>
<circle cx="830.5" cy="365.2" r="1.1" fill="#c0c8c0"/><circle cx="840.5" cy="365.2" r="1.1" fill="#c0c8c0"/>
<!-- pages -->
<rect x="891.5" y="352" width="7.5" height="11" fill="#9aabb8"/>
<rect x="887.2" y="353.5" width="7.5" height="11.5" fill="#a4b4c2" stroke="#232a33" stroke-width="0.5"/>
<rect x="882.7" y="355" width="7.5" height="12" fill="#afbfcc" stroke="#232a33" stroke-width="0.5"/>
<!-- skip -->
<rect x="936.8" y="352.3" width="3.4" height="12.5" fill="#8ea8bc"/>
<rect x="949.8" y="352.3" width="3.4" height="12.5" fill="#8ea8bc"/>
<path d="M941.8,353.8 L948.2,358.5 L941.8,363.3 Z" fill="#b07a48"/>
<!-- orange up arrow -->
<path d="M991.8,357 H995.5 V362.5 H999.5 V357 H996.8 L1003.2,350.2 L1009.6,357 H1003.8 V366.5 H991.8 Z" fill="#f08e18"/>
<!-- platform icon -->
<rect x="720" y="380" width="16" height="13.7" rx="1.6" fill="#b0b8c0"/>
<rect x="720.6" y="380.6" width="14.8" height="5.8" rx="1" fill="#94aeb8"/>
<path d="M722.3,390.3 H734" stroke="#20262c" stroke-width="1.1" stroke-dasharray="1.5 1.3"/>
<!-- station -->
<path d="M719.6,449.3 L725.6,443.2 L730.4,443.2 L736.6,449.3 Z" fill="#6e2a30" stroke="#c8b040" stroke-width="1"/>
<rect x="721" y="450.3" width="14" height="4.6" fill="#c4c8d0"/>
<path d="M722.5,452.5 v2.4 M724.8,452.5 v2.4 M727.1,452.5 v2.4 M729.4,452.5 v2.4 M731.7,452.5 v2.4 M734,452.5 v2.4" stroke="#3a3a48" stroke-width="0.8"/>
<!-- crossed -->
<path d="M721.5,504 L734.5,518 M734.5,504 L721.5,518" stroke="#c07890" stroke-width="2.6"/>
<path d="M728,513 L734,518.3 M728,513 L722,518.3" stroke="#c83830" stroke-width="2.6"/>
<rect x="720" y="508.2" width="16" height="5.5" fill="#c0c4c8"/>
<path d="M721.7,512.5 H734.5" stroke="#20262c" stroke-width="1" stroke-dasharray="1.5 1.2"/>
<!-- gear bracket icons -->
<g id="gb">
<rect x="722" y="568" width="14" height="10" fill="#0c0e10"/>
<path d="M719.5,566 H722.5 M721,566 V581.5 M719.5,581.5 H722.5" stroke="#b0b4b8" stroke-width="0.9" fill="none"/>
<circle cx="731.8" cy="576.5" r="4.2" fill="#98c0c8" stroke="#98c0c8" stroke-width="1.6" stroke-dasharray="1.3 1"/>
<circle cx="731.8" cy="576.5" r="1" fill="#2a4048"/>
<path d="M733.5,580.5 L736,578.5 L736,581.5 Z" fill="#e09040"/>
</g>
<use href="#gb" transform="translate(0,26)"/>
<use href="#gb" transform="translate(150,26)"/>
</svg>
<div id="ok"></div><div id="okbtn"><span>OK</span></div></body></html>
